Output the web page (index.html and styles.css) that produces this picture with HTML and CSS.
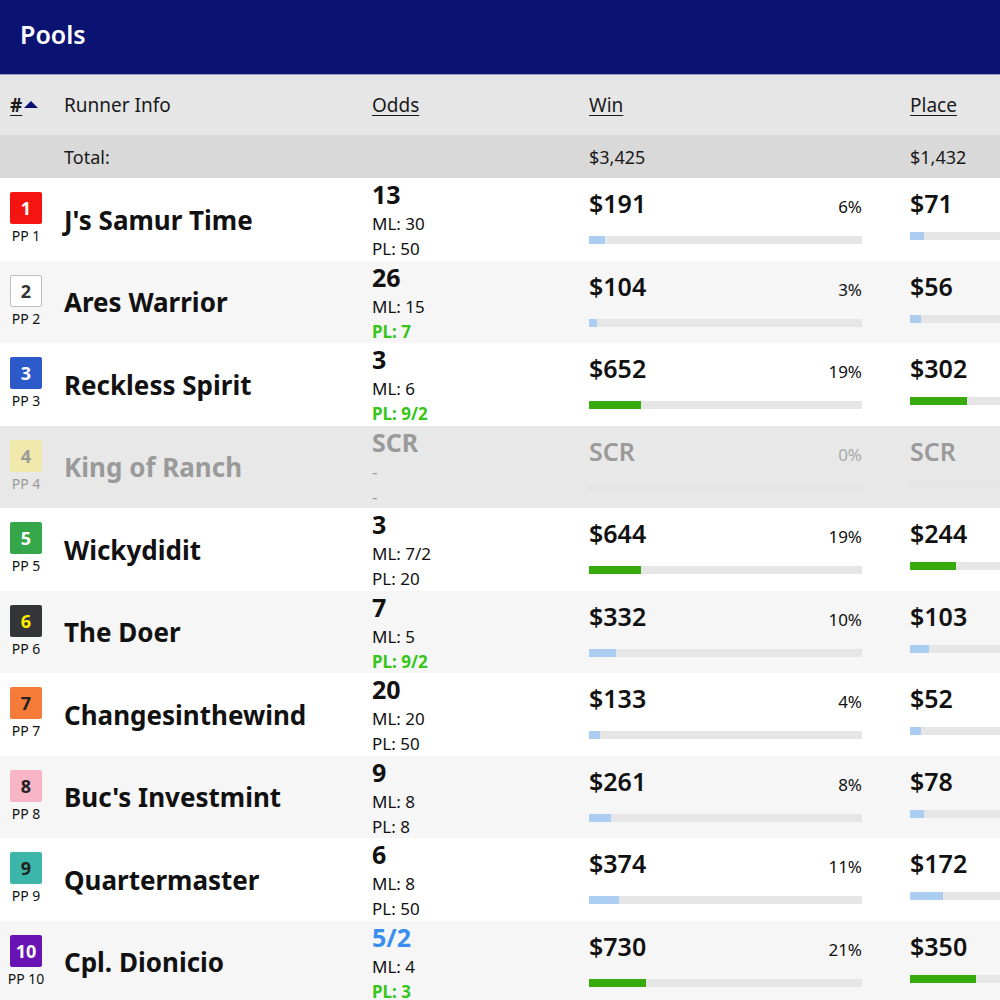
FILE: index.html
```html
<!DOCTYPE html>
<html>
<head>
<meta charset="utf-8">
<link rel="stylesheet" href="styles.css">
</head>
<body>
<div class="page">
  <header class="topbar"><h1 class="title">Pools</h1></header>
  <div class="table">
    <div class="row head">
      <div class="c num"><span class="u b">#</span><span class="tri"></span></div>
      <div class="c runner">Runner Info</div>
      <div class="c odds"><span class="u">Odds</span></div>
      <div class="c pool"><span class="u">Win</span></div>
      <div class="c pool"><span class="u">Place</span></div>
    </div>
    <div class="row total">
      <div class="c num"></div>
      <div class="c runner">Total:</div>
      <div class="c odds"></div>
      <div class="c pool">$3,425</div>
      <div class="c pool">$1,432</div>
    </div>

    <div class="row data odd">
      <div class="c numcell"><div class="badge b1">1</div><div class="pp">PP 1</div></div>
      <div class="c name">J's Samur Time</div>
      <div class="c oddscell"><div class="o">13</div><div class="ml">ML: 30</div><div class="ml">PL: 50</div></div>
      <div class="c poolcell"><div class="amt"><span>$191</span><span class="pct">6%</span></div><div class="track"><div class="fill blue" style="width:6%"></div></div></div>
      <div class="c poolcell"><div class="amt"><span>$71</span></div><div class="track"><div class="fill blue" style="width:5%"></div></div></div>
    </div>

    <div class="row data even">
      <div class="c numcell"><div class="badge b2">2</div><div class="pp">PP 2</div></div>
      <div class="c name">Ares Warrior</div>
      <div class="c oddscell"><div class="o">26</div><div class="ml">ML: 15</div><div class="ml pl">PL: 7</div></div>
      <div class="c poolcell"><div class="amt"><span>$104</span><span class="pct">3%</span></div><div class="track"><div class="fill blue" style="width:3%"></div></div></div>
      <div class="c poolcell"><div class="amt"><span>$56</span></div><div class="track"><div class="fill blue" style="width:4%"></div></div></div>
    </div>

    <div class="row data odd">
      <div class="c numcell"><div class="badge b3">3</div><div class="pp">PP 3</div></div>
      <div class="c name">Reckless Spirit</div>
      <div class="c oddscell"><div class="o">3</div><div class="ml">ML: 6</div><div class="ml pl">PL: 9/2</div></div>
      <div class="c poolcell"><div class="amt"><span>$652</span><span class="pct">19%</span></div><div class="track"><div class="fill green" style="width:19%"></div></div></div>
      <div class="c poolcell"><div class="amt"><span>$302</span></div><div class="track"><div class="fill green" style="width:21%"></div></div></div>
    </div>

    <div class="row data scr">
      <div class="c numcell"><div class="badge b4">4</div><div class="pp">PP 4</div></div>
      <div class="c name">King of Ranch</div>
      <div class="c oddscell"><div class="o">SCR</div><div class="ml">-</div><div class="ml">-</div></div>
      <div class="c poolcell"><div class="amt"><span>SCR</span><span class="pct">0%</span></div><div class="track"></div></div>
      <div class="c poolcell"><div class="amt"><span>SCR</span></div><div class="track"></div></div>
    </div>

    <div class="row data odd">
      <div class="c numcell"><div class="badge b5">5</div><div class="pp">PP 5</div></div>
      <div class="c name">Wickydidit</div>
      <div class="c oddscell"><div class="o">3</div><div class="ml">ML: 7/2</div><div class="ml">PL: 20</div></div>
      <div class="c poolcell"><div class="amt"><span>$644</span><span class="pct">19%</span></div><div class="track"><div class="fill green" style="width:19%"></div></div></div>
      <div class="c poolcell"><div class="amt"><span>$244</span></div><div class="track"><div class="fill green" style="width:17%"></div></div></div>
    </div>

    <div class="row data even">
      <div class="c numcell"><div class="badge b6">6</div><div class="pp">PP 6</div></div>
      <div class="c name">The Doer</div>
      <div class="c oddscell"><div class="o">7</div><div class="ml">ML: 5</div><div class="ml pl">PL: 9/2</div></div>
      <div class="c poolcell"><div class="amt"><span>$332</span><span class="pct">10%</span></div><div class="track"><div class="fill blue" style="width:10%"></div></div></div>
      <div class="c poolcell"><div class="amt"><span>$103</span></div><div class="track"><div class="fill blue" style="width:7%"></div></div></div>
    </div>

    <div class="row data odd">
      <div class="c numcell"><div class="badge b7">7</div><div class="pp">PP 7</div></div>
      <div class="c name">Changesinthewind</div>
      <div class="c oddscell"><div class="o">20</div><div class="ml">ML: 20</div><div class="ml">PL: 50</div></div>
      <div class="c poolcell"><div class="amt"><span>$133</span><span class="pct">4%</span></div><div class="track"><div class="fill blue" style="width:4%"></div></div></div>
      <div class="c poolcell"><div class="amt"><span>$52</span></div><div class="track"><div class="fill blue" style="width:4%"></div></div></div>
    </div>

    <div class="row data even">
      <div class="c numcell"><div class="badge b8">8</div><div class="pp">PP 8</div></div>
      <div class="c name">Buc's Investmint</div>
      <div class="c oddscell"><div class="o">9</div><div class="ml">ML: 8</div><div class="ml">PL: 8</div></div>
      <div class="c poolcell"><div class="amt"><span>$261</span><span class="pct">8%</span></div><div class="track"><div class="fill blue" style="width:8%"></div></div></div>
      <div class="c poolcell"><div class="amt"><span>$78</span></div><div class="track"><div class="fill blue" style="width:5%"></div></div></div>
    </div>

    <div class="row data odd">
      <div class="c numcell"><div class="badge b9">9</div><div class="pp">PP 9</div></div>
      <div class="c name">Quartermaster</div>
      <div class="c oddscell"><div class="o">6</div><div class="ml">ML: 8</div><div class="ml">PL: 50</div></div>
      <div class="c poolcell"><div class="amt"><span>$374</span><span class="pct">11%</span></div><div class="track"><div class="fill blue" style="width:11%"></div></div></div>
      <div class="c poolcell"><div class="amt"><span>$172</span></div><div class="track"><div class="fill blue" style="width:12%"></div></div></div>
    </div>

    <div class="row data even">
      <div class="c numcell"><div class="badge b10">10</div><div class="pp">PP 10</div></div>
      <div class="c name">Cpl. Dionicio</div>
      <div class="c oddscell"><div class="o fav">5/2</div><div class="ml">ML: 4</div><div class="ml pl">PL: 3</div></div>
      <div class="c poolcell"><div class="amt"><span>$730</span><span class="pct">21%</span></div><div class="track"><div class="fill green" style="width:21%"></div></div></div>
      <div class="c poolcell"><div class="amt"><span>$350</span></div><div class="track"><div class="fill green" style="width:24%"></div></div></div>
    </div>
  </div>
</div>
</body>
</html>
```

FILE: styles.css
```css
html, body {
  margin: 0;
  padding: 0;
  overflow: hidden;
  background: #ffffff;
}
body {
  font-family: "Noto Sans", "Open Sans", sans-serif;
  color: #111;
  width: 1000px;
}
.page {
  width: 1000px;
}
.topbar {
  height: 74px;
  background: #0a1272;
  border-bottom: 1px solid #9a9cc4;
  display: flex;
  align-items: center;
  padding-left: 20px;
}
.title {
  margin: 0;
  color: #fff;
  font-size: 25px;
  font-weight: 600;
  line-height: 1;
  margin-top: -6px;
}
.table {
  width: 1250px;
}
.row {
  display: grid;
  grid-template-columns: 54px 308px 217px 321px 350px;
}
.c {
  padding-left: 10px;
}
.head {
  height: 60px;
  background: #e6e6e6;
  align-items: center;
  font-size: 19px;
  color: #1a1a1a;
}
.u {
  text-decoration: underline;
  text-underline-offset: 3px;
  text-decoration-thickness: 1px;
}
.b { font-weight: 700; }
.num {
  display: flex;
  align-items: center;
}
.tri {
  display: inline-block;
  width: 0;
  height: 0;
  border-left: 7px solid transparent;
  border-right: 7px solid transparent;
  border-bottom: 7px solid #0a1272;
  margin-left: 2px;
  margin-top: -2px;
}
.total {
  height: 43px;
  background: #d9d9d9;
  align-items: center;
  font-size: 18px;
  color: #1a1a1a;
}
.data {
  height: 82.5px;
}
.odd { background: #ffffff; }
.even { background: #f6f6f6; }
.scr { background: #e8e8e8; }
.numcell {
  display: flex;
  flex-direction: column;
  align-items: center;
  width: 32px;
  padding-top: 14px;
}
.badge {
  width: 32px;
  height: 32px;
  box-sizing: border-box;
  border-radius: 2px;
  display: flex;
  align-items: center;
  justify-content: center;
  font-size: 18px;
  font-weight: 700;
  color: #fff;
}
.b1 { background: #f5140f; }
.b2 { background: #fff; border: 1px solid #bdbdbd; color: #333; }
.b3 { background: #2d5ac9; }
.b4 { background: #f1e9ab; color: #9a9a9a; }
.b5 { background: #36a64a; }
.b6 { background: #333538; color: #ffee00; }
.b7 { background: #f47c38; color: #222; }
.b8 { background: #f7b5c6; color: #222; }
.b9 { background: #3db6aa; color: #222; }
.b10 { background: #6a13b5; }
.pp {
  font-size: 14px;
  line-height: 18px;
  margin-top: 3px;
  white-space: nowrap;
  color: #111;
}
.name {
  display: flex;
  align-items: center;
  font-size: 26px;
  font-weight: 700;
  color: #111;
  white-space: nowrap;
}
.oddscell {
  display: flex;
  flex-direction: column;
}
.o {
  font-size: 25px;
  font-weight: 700;
  line-height: 34px;
  margin-top: -1px;
  color: #111;
}
.o.fav { color: #3a8ef0; }
.ml {
  font-size: 17px;
  line-height: 25px;
  color: #111;
}
.ml.pl {
  color: #37c51a;
  font-weight: 700;
}
.poolcell {
  padding-top: 10px;
  width: 273px;
  display: flex;
  flex-direction: column;
}
.amt {
  display: flex;
  justify-content: space-between;
  align-items: baseline;
  font-size: 25px;
  font-weight: 600;
  line-height: 30px;
  color: #111;
}
.pct {
  font-size: 17px;
  font-weight: 400;
}
.track {
  margin-top: 14px;
  height: 8px;
  background: #e6e6e6;
}
.fill {
  height: 100%;
}
.fill.blue { background: #abcdf1; }
.fill.green { background: #37ab0c; }
.scr .name, .scr .o, .scr .ml, .scr .amt, .scr .pp { color: #9a9a9a; }
.scr .pct { color: #a8a8a8; }
.scr .track { background: #e6e6e6; }
```
